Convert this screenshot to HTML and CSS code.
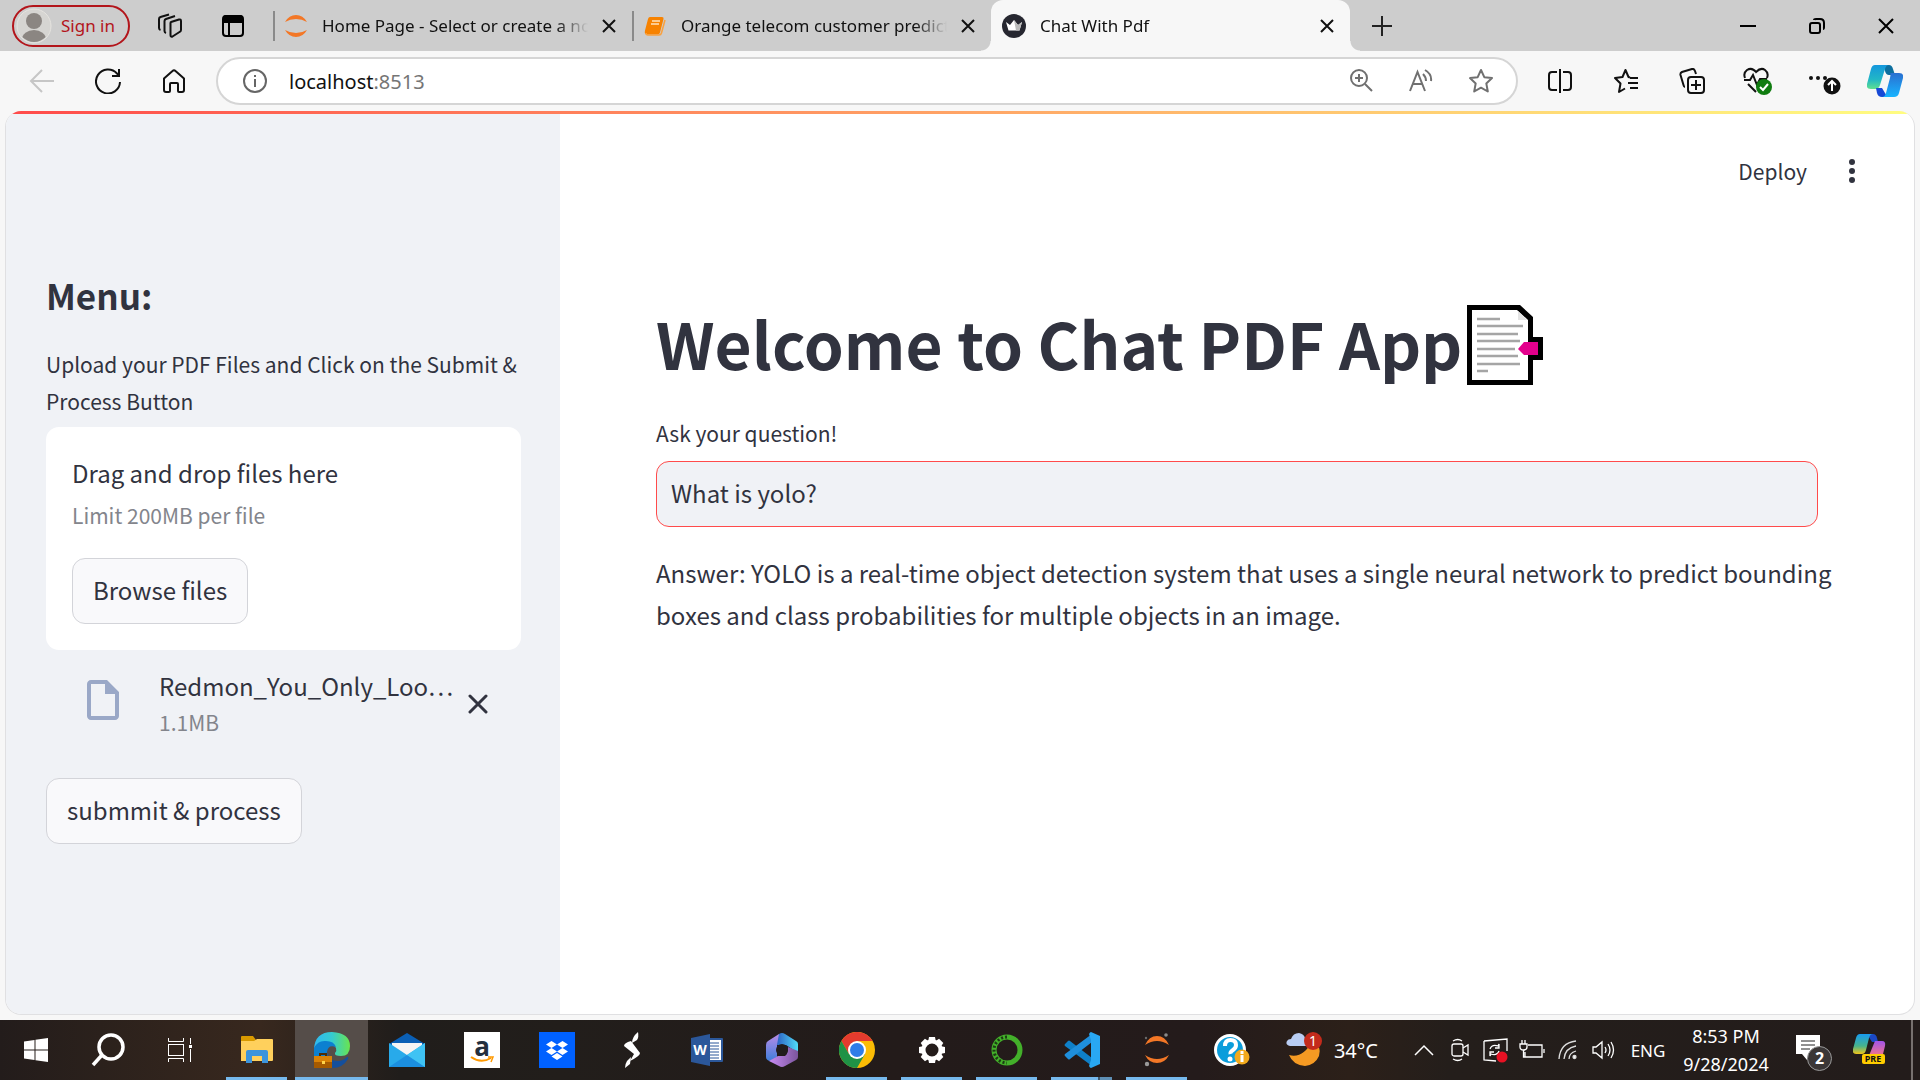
FILE: index.html
```html
<!DOCTYPE html>
<html lang="en">
<head>
<meta charset="utf-8">
<meta name="viewport" content="width=device-width, initial-scale=1">
<title>Chat With Pdf</title>
<link rel="stylesheet" href="styles.css">
</head>
<body>
<header class="browser">
  <div class="tabstrip">
    <button class="signin" type="button">
      <svg class="avatar" width="36" height="36" viewBox="0 0 36 36"><circle cx="18" cy="18" r="17" fill="#d6d5d2" stroke="#e6e4e0"/><clipPath id="av"><circle cx="18" cy="18" r="16"/></clipPath><g clip-path="url(#av)" fill="#8b8682"><circle cx="18" cy="13" r="8"/><ellipse cx="18" cy="31" rx="12" ry="9"/></g></svg>
      Sign in
    </button>
    <button class="strip-btn" type="button" aria-label="Workspaces">
      <svg width="26" height="26" viewBox="0 0 26 26" fill="none" stroke="#111" stroke-width="2" stroke-linejoin="round"><path d="M14 9l8-2.500q2-.5 2 1.500v9q0 1.500-1.500 2l-7 4.500q-2 .8-2-1.500V10q0-1 .5-1z"/><path d="M9 20q-1.500-.5-1.500-2V8q0-1.500 1.500-2l9-3M3.500 17Q2 16.500 2 15V6q0-1.500 1.500-2L12 1.500"/></svg>
    </button>
    <button class="strip-btn" type="button" aria-label="Tab actions">
      <svg width="24" height="24" viewBox="0 0 24 24"><rect x="2" y="2" width="20" height="20" rx="3" fill="none" stroke="#000" stroke-width="2"/><path d="M2 4q0-3 3-3h14q3 0 3 3v5H2z"/><path d="M8 8v14" stroke="#000" stroke-width="2"/></svg>
    </button>
    <div class="tabs" role="tablist">
      <div class="tab">
        <svg width="24" height="24" viewBox="0 0 24 24" fill="#f37726"><path d="M1 8Q5 1 12 1t11 7Q18 5 12 5T1 8zM1 16q5 3 11 3t11-3q-4 7-11 7T1 16z"/></svg>
        <span class="tab-title" role="tab">Home Page - Select or create a notebook</span>
        <button class="tab-close" type="button" aria-label="Close tab"><svg width="14" height="14" viewBox="0 0 14 14"><path d="M1 1l12 12M13 1L1 13" stroke="#111" stroke-width="2"/></svg></button>
      </div>
      <div class="tab">
        <svg width="24" height="24" viewBox="0 0 24 24"><path d="M7 3h12q2 0 1.500 2L17 18.500q-.5 2-2.500 2H4q-3 0-2-4L5 5q.5-2 2-2z" fill="#f78200"/><path d="M9 7h8M8 10h8" stroke="#ffe2bd" stroke-width="1.300" fill="none"/><path d="M3 19q0 2 2 2h11q2 0 2.500-2L22 6" stroke="#f9a13f" stroke-width="1.500" fill="none"/></svg>
        <span class="tab-title" role="tab">Orange telecom customer prediction</span>
        <button class="tab-close" type="button" aria-label="Close tab"><svg width="14" height="14" viewBox="0 0 14 14"><path d="M1 1l12 12M13 1L1 13" stroke="#111" stroke-width="2"/></svg></button>
      </div>
      <div class="tab tab-active">
        <svg width="24" height="24" viewBox="0 0 24 24"><circle cx="12" cy="12" r="12" fill="#262730"/><path d="M4 8l4 3 4-5 4 5 4-3-2.500 8.500h-11z" fill="#fff"/><path d="M12 6l4 5 4-3-2.500 8.500H14z" fill="#bbb"/></svg>
        <span class="tab-title" role="tab" aria-selected="true">Chat With Pdf</span>
        <button class="tab-close" type="button" aria-label="Close tab"><svg width="14" height="14" viewBox="0 0 14 14"><path d="M1 1l12 12M13 1L1 13" stroke="#111" stroke-width="2"/></svg></button>
      </div>
    </div>
    <button class="strip-btn newtab" type="button" aria-label="New tab"><svg width="22" height="22" viewBox="0 0 22 22"><path d="M11 1v20M1 11h20" stroke="#222" stroke-width="2"/></svg></button>
    <div class="window-controls">
      <button type="button" aria-label="Minimize"><svg width="16" height="16" viewBox="0 0 16 16"><path d="M0 8h16" stroke="#000" stroke-width="2"/></svg></button>
      <button type="button" aria-label="Restore"><svg width="16" height="16" viewBox="0 0 16 16" fill="none" stroke="#000" stroke-width="2"><rect x="1" y="5" width="10" height="10" rx="2"/><path d="M5 2q0-1 2-1h4q4 0 4 4v4q0 2-1 2"/></svg></button>
      <button type="button" aria-label="Close window"><svg width="16" height="16" viewBox="0 0 16 16"><path d="M1 1l14 14M15 1L1 15" stroke="#000" stroke-width="2"/></svg></button>
    </div>
  </div>
  <div class="toolbar">
    <button class="tool" type="button" aria-label="Back"><svg width="26" height="26" viewBox="0 0 26 26" fill="none" stroke="#c6c6c6" stroke-width="2"><path d="M13 2L2 13l11 11M2 13h23"/></svg></button>
    <button class="tool" type="button" aria-label="Refresh"><svg width="26" height="26" viewBox="0 0 26 26" fill="none" stroke="#111" stroke-width="2"><path d="M25 14A12 12 0 1 1 22 5.500l2 2M24 1v7h-7"/></svg></button>
    <button class="tool" type="button" aria-label="Home"><svg width="26" height="26" viewBox="0 0 26 26" fill="none" stroke="#111" stroke-width="2" stroke-linejoin="round"><path d="M3 10.500L11.500 3q1.500-1.500 3 0L23 10.500V22q0 2-2 2h-3q-1 0-1-1v-7q0-1-1-1h-6q-1 0-1 1v7q0 1-1 1H5q-2 0-2-2z"/></svg></button>
    <div class="address">
      <svg width="26" height="26" viewBox="0 0 26 26" fill="none" stroke="#666" stroke-width="2"><circle cx="13" cy="13" r="11"/><path d="M13 11v8M13 7v2"/></svg>
      <span class="url">localhost<span class="port">:8513</span></span>
      <button class="inner-tool" type="button" aria-label="Zoom"><svg width="24" height="24" viewBox="0 0 24 24" fill="none" stroke="#707070" stroke-width="2"><circle cx="10" cy="9" r="8"/><path d="M16 15l7 7M10 5v8M6 9h8"/></svg></button>
      <button class="inner-tool" type="button" aria-label="Read aloud"><svg width="24" height="24" viewBox="0 0 24 24" fill="none" stroke="#707070" stroke-width="2"><path d="M1 22L8.500 3l7.500 19M4 15h9M14 5q3 3 3 7M16 1q7 4 6 11"/></svg></button>
      <button class="inner-tool" type="button" aria-label="Add to favorites"><svg width="26" height="26" viewBox="0 0 26 26" fill="none" stroke="#707070" stroke-width="2" stroke-linejoin="round"><path d="M13 2l3.300 7.200 7.700.9-5.700 5.300 1.500 8.100L13 19.700l-6.800 3.800 1.500-8.100L2 10.100l7.700-.9z"/></svg></button>
    </div>
    <button class="tool" type="button" aria-label="Split screen"><svg width="26" height="26" viewBox="0 0 26 26" fill="none" stroke="#111" stroke-width="2"><path d="M10 4H5Q2 4 2 7v12q0 3 3 3h5M16 4h5q3 0 3 3v12q0 3-3 3h-5M13 1v24"/></svg></button>
    <button class="tool" type="button" aria-label="Favorites"><svg width="26" height="26" viewBox="0 0 26 26" fill="none" stroke="#111" stroke-width="2" stroke-linejoin="round"><path d="M17 9.500L15.500 9 12.500 2 9.500 9 2 10l5.500 5.500L6 24l6-3.500M17 10h8M15 15h10M17 20h8"/></svg></button>
    <button class="tool" type="button" aria-label="Collections"><svg width="26" height="26" viewBox="0 0 26 26" fill="none" stroke="#111" stroke-width="2"><rect x="9" y="9" width="16" height="16" rx="3"/><path d="M17 12v10M12 17h10M6 19q-1 0-1.500-2L1.500 7Q1 5 3 4l10-3q2-.5 3 2l1 3"/></svg></button>
    <button class="tool" type="button" aria-label="Browser essentials"><svg width="30" height="28" viewBox="0 0 30 28" fill="none" stroke="#111" stroke-width="2"><path d="M2 11Q0 6 4 3q5-3 9 2 5-5 9-2 4 3 2 8M1 13h6l3-5 4 10 3-6h7M5 17l8 8"/><circle cx="21" cy="20" r="8" fill="#107c10" stroke="none"/><path d="M17 20l3 3 5-6" stroke="#fff"/></svg></button>
    <button class="tool" type="button" aria-label="Settings and more"><svg width="34" height="30" viewBox="0 0 34 30"><g fill="#111"><circle cx="4" cy="12" r="2"/><circle cx="11" cy="12" r="2"/><circle cx="18" cy="12" r="2"/><circle cx="25" cy="20" r="8.500"/></g><path d="M25 25v-10M21 19l4-4 4 4" stroke="#fff" stroke-width="2" fill="none"/></svg></button>
    <button class="tool copilot" type="button" aria-label="Copilot">
      <svg width="36" height="34" viewBox="0 0 36 34"><defs><linearGradient id="cpa" x1="0" y1="0" x2="0" y2="1"><stop offset="0" stop-color="#1497dd"/><stop offset=".6" stop-color="#22b7c6"/><stop offset="1" stop-color="#5fe08f"/></linearGradient><linearGradient id="cpb" x1="0" y1="0" x2="0" y2="1"><stop offset="0" stop-color="#2a6fd0"/><stop offset="1" stop-color="#18b4ff"/></linearGradient></defs><path d="M16 1h6q3 0 4 4l2 6h-6q-3 0-4-4z" fill="#0d6f9f"/><path d="M8 1h14q-3 0-4 4l-5 16q-1 4-5 4H4q-5 0-4-5L4 5q1-4 4-4z" fill="url(#cpa)"/><path d="M9 24h6l3 5q1 3 4 4h-7q-4 0-5-4z" fill="#1749d6"/><path d="M23 9h9q5 0 4 5l-4 15q-1 4-5 4h-12q3 0 4-4l4-15q1-5 0-5z" fill="url(#cpb)"/></svg>
    </button>
  </div>
</header>

<div class="viewport">
  <div class="page">
    <aside class="sidebar">
      <h2 class="menu-title">Menu:</h2>
      <label class="label upload-label" for="browse">Upload your PDF Files and Click on the Submit &amp; Process Button</label>
      <section class="dropzone">
        <span class="drop-main">Drag and drop files here</span>
        <span class="drop-hint">Limit 200MB per file</span>
        <button class="btn" id="browse" type="button">Browse files</button>
      </section>
      <div class="file">
        <svg class="file-icon" width="48" height="48" viewBox="0 0 24 24" fill="#9aa8c7"><path d="M6 2c-1.100 0-2 .9-2 2v16c0 1.100.9 2 2 2h12c1.100 0 2-.9 2-2V8l-6-6H6zm0 2h7v5h5v11H6V4z"/></svg>
        <div class="file-info">
          <span class="file-name">Redmon_You_Only_Loo…</span>
          <span class="file-size">1.1MB</span>
        </div>
        <button class="file-remove" type="button" aria-label="Remove file"><svg width="20" height="20" viewBox="0 0 20 20"><path d="M2 2l16 16M18 2L2 18" stroke="#31333f" stroke-width="3" stroke-linecap="round"/></svg></button>
      </div>
      <button class="btn" type="button">submmit &amp; process</button>
    </aside>
    <main class="main">
      <div class="app-bar">
        <button class="deploy" type="button">Deploy</button>
        <button class="dots" type="button" aria-label="Main menu"><svg width="6" height="24" viewBox="0 0 6 24" fill="#31333f"><circle cx="3" cy="3" r="3"/><circle cx="3" cy="12" r="3"/><circle cx="3" cy="21" r="3"/></svg></button>
      </div>
      <h1 class="title">Welcome to Chat PDF App<svg class="emoji" width="76" height="80" viewBox="0 0 76 80" role="img" aria-label="Bookmark tabs"><path d="M0 0h53l13 12v20h10v23H66v25H0z"/><path d="M5 5h45l11 10v60H5z" fill="#fff"/><path d="M51 6l9 9h-9z" fill="#e3e3e3"/><path d="M10 14h23M10 21h46M10 29h41M10 36h43M10 44h38M10 51h41M10 59h43M10 66h11" stroke="#a5a5a5" stroke-width="2.500"/><path d="M51 44l6-7h14v13H57z" fill="#e3008c"/></svg></h1>
      <label class="label" for="question">Ask your question!</label>
      <input class="question" id="question" type="text" value="What is yolo?">
      <p class="answer">Answer: YOLO is a real-time object detection system that uses a single neural network to predict bounding boxes and class probabilities for multiple objects in an image.</p>
    </main>
  </div>
</div>

<footer class="taskbar">
  <div class="system">
    <button type="button" aria-label="Start"><svg width="24" height="24" viewBox="0 0 24 24" fill="#fff"><path d="M0 3.500L10.500 2v9.500H0zM11.500 1.800L24 0v11.500H11.500zM0 12.500h10.500V22L0 20.500zM11.500 12.500H24V24l-12.500-1.800z"/></svg></button>
    <button type="button" aria-label="Search"><svg width="34" height="34" viewBox="0 0 34 34" fill="none" stroke="#fff" stroke-width="3.500"><circle cx="20" cy="14" r="12"/><path d="M11 22L2 32"/></svg></button>
    <button type="button" aria-label="Task view"><svg width="26" height="24" viewBox="0 0 26 24" fill="none" stroke="#fff"><rect x="1.500" y="6.500" width="15" height="11"/><path d="M1.500 0v3.500h15V0M1.500 24v-3.500h15V24M23.500 0v6M23.500 11v13"/><path d="M22 7h3v3h-3z" fill="#fff" stroke="none"/></svg></button>
  </div>
  <nav class="apps" aria-label="Apps">
    <button class="app running" type="button" aria-label="File Explorer"><svg width="32" height="28" viewBox="0 0 32 28"><path d="M0 1q0-1 1-1h11l3 4v5H0z" fill="#d99a00"/><path d="M0 5h13l3-2h15q1 0 1 1v20q0 1-1 1H0z" fill="#ffd05c"/><path d="M5 27V16q0-2 2-2h18q2 0 2 2v11h-6v-7H11v7z" fill="#3c94dc"/></svg></button>
    <button class="app running current" type="button" aria-label="Edge"><svg width="36" height="36" viewBox="0 0 36 36"><defs><linearGradient id="eg"><stop offset="0" stop-color="#2fb9f2"/><stop offset=".5" stop-color="#35cbd0"/><stop offset="1" stop-color="#69e44e"/></linearGradient></defs><path d="M0 17Q1 0 18 0q18 1 18 14 0 10-9 10-7 0-6-3 2-2 1-5-3-6-12-6Q3 10 0 17z" fill="url(#eg)"/><path d="M0 24V16Q4 8 12 9q8 0 10 6-8-3-9 5 0 4 2 7L0 30z" fill="#0c80d0"/><path d="M13 20q0 9 11 9 5 0 9-4 2-1 1 2-5 9-16 9-8-4-5-16z" fill="#144f9c"/><path d="M6 24v-2h6v2" stroke="#4b2c05" stroke-width="2" fill="none"/><rect y="24" width="18" height="12" fill="#d98206"/><path d="M0 30h18v6H0z" fill="#a65a00"/><path d="M8 29h3v3H8z" fill="#ffd24a"/></svg></button>
    <button class="app" type="button" aria-label="Mail"><svg width="36" height="34" viewBox="0 0 36 34"><path d="M0 11L18 0l18 11v8H0z" fill="#0a5fb5"/><path d="M3 10h30v14H3z" fill="#f4f4f4"/><path d="M0 10l18 12L36 10v24H0z" fill="#28aaea"/><path d="M0 34l18-12L36 34z" fill="#1b8fe0"/><path d="M36 10v24L18 22z" fill="#3fc3f4"/></svg></button>
    <button class="app" type="button" aria-label="Amazon"><svg width="36" height="36" viewBox="0 0 36 36"><path fill="#fff" d="M0 0h36v36H0z"/><text x="18" y="24" text-anchor="middle" class="amazon-a">a</text><path d="M7 25q10 7 20 1" fill="none" stroke="#f90" stroke-width="2"/><path d="M24 25h5l-2 5" fill="none" stroke="#f90" stroke-width="1.500"/></svg></button>
    <button class="app" type="button" aria-label="Dropbox"><svg width="36" height="36" viewBox="0 0 36 36"><path fill="#0061ff" d="M0 0h36v36H0z"/><path fill="#fff" d="M12.500 9L18 12.500 12.500 16 7 12.500zM23.500 9L29 12.500 23.500 16 18 12.500zM12.500 16L18 19.500 12.500 23 7 19.500zM23.500 16L29 19.500 23.500 23 18 19.500zM18 21l5.500 3.500L18 28l-5.500-3.500z"/></svg></button>
    <button class="app" type="button" aria-label="S app"><svg width="18" height="36" viewBox="0 0 18 36" fill="#fff"><path d="M15 0q1 5-1 8l-5 3Q9 5 15 0zM8 9l9 12q0 3-10 8l4-7L1 14q0-3 7-5zM8 25l-1 7-5 4q0-4 2-7z"/></svg></button>
    <button class="app" type="button" aria-label="Word"><svg width="32" height="32" viewBox="0 0 32 32"><rect x="17" y="4" width="15" height="24" rx="1" fill="#2b579a"/><path fill="#fff" d="M18 6h12v20H18z"/><path d="M19 9h9M19 12h9M19 15h9M19 18h9M19 21h9M19 24h9" stroke="#2b579a"/><path d="M0 4l19-4v32L0 28z" fill="#2b579a"/><text x="9" y="21" text-anchor="middle" class="word-w">W</text></svg></button>
    <button class="app" type="button" aria-label="Microsoft 365"><svg width="32" height="34" viewBox="0 0 32 34"><defs><linearGradient id="ma" x1="0" y1="0" x2="0" y2="1"><stop offset="0" stop-color="#b98be6"/><stop offset="1" stop-color="#3e7fdc"/></linearGradient><linearGradient id="mb"><stop offset="0" stop-color="#2d63c4"/><stop offset="1" stop-color="#50dcf8"/></linearGradient><linearGradient id="mc"><stop offset="0" stop-color="#c98cf4"/><stop offset="1" stop-color="#7b559c"/></linearGradient></defs><path d="M2 8L13 1q4 2 2 5l-4 6v12l-7 4q-4-1-4-4V12q0-3 2-4z" fill="url(#ma)"/><path d="M13 1q3-2 6 0l11 7q2 1 2 3v9L20 12h-9q1-6 2-11z" fill="url(#mb)"/><path d="M32 18v6q0 2-2 3l-11 6q-3 2-6 0L3 28l9-5h7q3-2 3-9z" fill="url(#mc)"/><circle cx="16" cy="17" r="6" fill="#221d1c"/></svg></button>
    <button class="app running" type="button" aria-label="Chrome"><svg width="36" height="36" viewBox="0 0 36 36"><circle cx="18" cy="18" r="18" fill="#fbbc05"/><path d="M2.400 9A18 18 0 0 1 33.600 9H18L10 22z" fill="#e33b2e"/><path d="M2.400 9A18 18 0 0 0 18 36l8-14H10z" fill="#1f9246"/><circle cx="18" cy="18" r="9" fill="#fff"/><circle cx="18" cy="18" r="7" fill="#2f7de9"/></svg></button>
    <button class="app running" type="button" aria-label="Settings"><svg width="28" height="28" viewBox="-14 -14 28 28"><g fill="#fff"><path id="tooth" d="M-3-13h6l1 5h-8z"/><use href="#tooth" transform="rotate(45)"/><use href="#tooth" transform="rotate(90)"/><use href="#tooth" transform="rotate(135)"/><use href="#tooth" transform="rotate(180)"/><use href="#tooth" transform="rotate(225)"/><use href="#tooth" transform="rotate(270)"/><use href="#tooth" transform="rotate(315)"/></g><circle r="8.500" fill="none" stroke="#fff" stroke-width="4"/></svg></button>
    <button class="app running" type="button" aria-label="Anaconda"><svg width="34" height="34" viewBox="0 0 34 34" fill="none"><circle cx="17" cy="17" r="13" stroke="#43b02a" stroke-width="5"/><path d="M17 4A13 13 0 0 0 17 30" stroke="#1c3b14" stroke-width="3" stroke-dasharray="2 2"/></svg></button>
    <button class="app running stacked" type="button" aria-label="Visual Studio Code"><svg width="36" height="36" viewBox="0 0 36 36"><path d="M1 12l3-3q1-1 2 0l22 17v8L1 14q-1-1 0-2z" fill="#0f80c8"/><path d="M1 24l3 3q1 1 2 0l22-17V2L1 22q-1 1 0 2z" fill="#1f8fdc"/><path d="M27 0l9 4v28l-9 4q-1 0-2-2l2-6V8l-2-6q1-2 2-2z" fill="#29a8f3"/></svg></button>
    <button class="app running" type="button" aria-label="Jupyter"><svg width="26" height="34" viewBox="0 0 26 34"><path d="M1 12Q5 3 13 3t12 9Q19 8 13 8T1 12zM1 22q6 4 12 4t12-4q-4 8-12 8T1 22z" fill="#f37726"/><circle cx="22" cy="2" r="1.800" fill="#8a8a8a"/><circle cx="3" cy="31" r="2.200" fill="#9a9a9a"/><circle cx="2" cy="5" r="1.200" fill="#6a6a6a"/></svg></button>
    <button class="app" type="button" aria-label="Help"><svg width="36" height="32" viewBox="0 0 36 32"><circle cx="16" cy="16" r="14.500" fill="#0b9ddb" stroke="#fff" stroke-width="3"/><path d="M11 12q0-6 5.500-6t5.500 5q0 3-3 5t-2.500 4" fill="none" stroke="#fff" stroke-width="4"/><circle cx="16" cy="25" r="2.500" fill="#fff"/><circle cx="28" cy="23" r="7.500" fill="#f2a91c"/><path d="M28 21v7M28 17v3" stroke="#fff" stroke-width="3"/></svg></button>
  </nav>
  <div class="tray">
    <button class="weather" type="button"><svg width="36" height="36" viewBox="0 0 36 36"><path d="M3 23q14 4 24-15 9 6 6 16-4 9-14 10Q7 33 3 23z" fill="#f59a23"/><path d="M4 14q-5-1-3-5 1-2 4-2 2-6 8-6 5 1 6 5 4 0 4 4t-4 4z" fill="#b9cdf3"/><circle cx="27" cy="9" r="9" fill="#c42b1c"/><text x="27" y="14" text-anchor="middle" class="badge-one">1</text></svg>34°C</button>
    <button class="tray-btn" type="button" aria-label="Show hidden icons"><svg width="20" height="12" viewBox="0 0 20 12"><path d="M1 11l9-9 9 9" fill="none" stroke="#fff" stroke-width="1.500"/></svg></button>
    <button class="tray-btn" type="button" aria-label="Meet now"><svg width="18" height="24" viewBox="0 0 18 24" fill="none" stroke="#fff" stroke-width="1.300"><rect x="1" y="6" width="11" height="12" rx="2"/><path d="M12 10l5-3v10l-5-3M2 3q5-3 9 0M2 21q5 3 9 0"/></svg></button>
    <button class="tray-btn" type="button" aria-label="Sync"><svg width="26" height="26" viewBox="0 0 26 26" fill="none" stroke="#fff" stroke-width="1.300"><path d="M1 4l23-2v12M1 4v19l12 1M7 12q2-5 8-3l1-2v4h-4M16 14q-2 5-8 3l-1 2v-4h4"/><circle cx="19" cy="20" r="5.500" fill="#e81123" stroke="none"/></svg></button>
    <button class="tray-btn" type="button" aria-label="Battery"><svg width="26" height="20" viewBox="0 0 26 20" fill="none" stroke="#fff" stroke-width="1.300"><path d="M9 5h14v12H6v-5M25 9v4M1 4h7v3q0 3-3.500 3T1 7zM3 0v4M6 0v4M4.500 10v7H7"/></svg></button>
    <button class="tray-btn" type="button" aria-label="Wi-Fi"><svg width="20" height="20" viewBox="0 0 20 20" fill="none" stroke="#ddd" stroke-width="1.300"><path d="M1 19Q2 3 18 1M6 19Q7 8 18 6M11 19q0-6 7-8"/><circle cx="16.500" cy="17" r="1.500" fill="#fff"/></svg></button>
    <button class="tray-btn" type="button" aria-label="Volume"><svg width="24" height="20" viewBox="0 0 24 20" fill="none" stroke="#fff" stroke-width="1.300"><path d="M1 7h3l6-5v16l-6-5H1zM13 7q2 3 0 6M16 4q4 6 0 12M19 2q5 8 0 16"/></svg></button>
    <button class="lang" type="button">ENG</button>
    <button class="clock" type="button"><span>8:53 PM</span><span>9/28/2024</span></button>
    <button class="notify" type="button" aria-label="Notifications"><svg width="36" height="36" viewBox="0 0 36 36"><path d="M0 0h24v19H13l-2 6-5-6H0z" fill="#fff"/><path d="M5 6h14M5 10h14M5 14h9" stroke="#222"/><circle cx="23.500" cy="23.500" r="12" fill="#3b3737" stroke="#999"/><text x="23.500" y="29" text-anchor="middle" class="badge-two">2</text></svg></button>
    <button class="pre" type="button" aria-label="Copilot preview"><svg width="34" height="32" viewBox="0 0 34 32"><defs><linearGradient id="pa" x1="0" y1="0" x2="0" y2="1"><stop offset="0" stop-color="#179bf0"/><stop offset=".6" stop-color="#47b38c"/><stop offset="1" stop-color="#f0c419"/></linearGradient><linearGradient id="pb" x1="0" y1="0" x2="0" y2="1"><stop offset="0" stop-color="#a254ea"/><stop offset="1" stop-color="#ff7a7a"/></linearGradient></defs><path d="M14 0h6q3 0 4 4l1 4h-6z" fill="#1b48c4"/><path d="M7 0h13q-3 0-4 4l-3 12q-1 4-4 4H3q-4 0-3-5L3 4q1-4 4-4z" fill="url(#pa)"/><path d="M22 7h7q4 0 3 5l-3 12H15z" fill="url(#pb)"/><rect x="9" y="20" width="23" height="10" rx="2" fill="#fc0"/><text x="20" y="28" text-anchor="middle" class="pre-text">PRE</text></svg></button>
    <button class="show-desktop" type="button" aria-label="Show desktop"></button>
  </div>
</footer>
</body>
</html>
```
FILE: styles.css
```css
* { box-sizing: border-box; }

:root {
  --ink: #31333f;
  --muted: #83858c;
  --ui: "Noto Sans", "Open Sans", sans-serif;
  --app: "Noto Sans CJK KR", "Noto Sans CJK SC", sans-serif;
}

body {
  margin: 0;
  min-height: 100vh;
  display: flex;
  flex-direction: column;
  background: #f7f7f7;
  font-family: var(--ui);
  color: #111;
}

button {
  margin: 0;
  padding: 0;
  border: 0;
  background: none;
  font: inherit;
  color: inherit;
}

svg { display: block; flex: none; }

/* Tab strip */
.tabstrip {
  display: flex;
  align-items: center;
  height: 51px;
  padding-left: 12px;
  background: #cdcdcd;
}

.signin {
  display: flex;
  align-items: center;
  gap: 9px;
  width: 118px;
  height: 42px;
  padding-left: 2px;
  border: 2px solid #b3151b;
  border-radius: 21px;
  color: #b3151b;
  font-size: 17px;
  white-space: nowrap;
}

.strip-btn {
  display: grid;
  place-items: center;
  width: 63px;
  height: 51px;
}

.signin + .strip-btn { margin-left: 8px; }

.tabs {
  display: flex;
  align-items: stretch;
  height: 51px;
  margin-left: 9px;
}

.tab {
  position: relative;
  display: flex;
  align-items: center;
  gap: 14px;
  width: 359px;
  padding: 0 16px 0 11px;
  font-size: 17px;
}

.tab:not(.tab-active)::before {
  content: "";
  position: absolute;
  left: 0;
  top: 11px;
  width: 2px;
  height: 30px;
  background: #8a8a8a;
}

.tab-title {
  flex: 1;
  overflow: hidden;
  white-space: nowrap;
  -webkit-mask-image: linear-gradient(to right, #000 calc(100% - 32px), transparent);
  mask-image: linear-gradient(to right, #000 calc(100% - 32px), transparent);
}

.tab-active {
  background: #f7f7f7;
  border-radius: 12px 12px 0 0;
}

.tab-active::before,
.tab-active::after {
  content: "";
  position: absolute;
  bottom: 0;
  width: 10px;
  height: 10px;
}

.tab-active::before {
  left: -10px;
  background: radial-gradient(circle at 0 0, transparent 9px, #f7f7f7 10px);
}

.tab-active::after {
  right: -10px;
  background: radial-gradient(circle at 100% 0, transparent 9px, #f7f7f7 10px);
}

.window-controls {
  display: flex;
  margin-left: auto;
}

.window-controls button {
  display: grid;
  place-items: center;
  width: 69px;
  height: 51px;
}

/* Toolbar */
.toolbar {
  display: flex;
  align-items: center;
  height: 60px;
  padding: 0 7px 0 9px;
}

.tool {
  display: grid;
  place-items: center;
  flex: none;
  width: 66px;
  height: 48px;
}

.address ~ .copilot { width: 56px; }

.address {
  display: flex;
  align-items: center;
  flex: 1;
  height: 48px;
  margin: 0 9px;
  padding: 0 5px 0 24px;
  border: 2px solid #d5d5d5;
  border-radius: 24px;
  background: #fff;
}

.url {
  flex: 1;
  padding-left: 21px;
  font-size: 20px;
}

.port { color: #757575; }

.inner-tool {
  display: grid;
  place-items: center;
  width: 60px;
  height: 40px;
}

/* Web page frame */
.viewport {
  display: flex;
  flex: 1;
  padding: 0 5px 5px;
}

.page {
  position: relative;
  display: flex;
  flex: 1;
  overflow: hidden;
  border: 1px solid #e0e0e2;
  border-top: 0;
  border-radius: 16px;
  background: #fff;
  color: var(--ink);
  font-family: var(--app);
  font-size: 24px;
}

.page::before {
  content: "";
  position: absolute;
  inset: 0 0 auto;
  height: 3px;
  background: linear-gradient(90deg, #ff4b4b, #fffd80);
}

.sidebar {
  flex: none;
  width: 554px;
  padding: 163px 39px 39px 40px;
  background: #f0f2f6;
}

.menu-title {
  margin: 0 0 30px;
  font-size: 35px;
  line-height: 42px;
  font-weight: 600;
}

.label {
  display: block;
  margin-bottom: 9px;
  font-size: 21px;
  line-height: 37px;
}

.upload-label {
  margin-right: -8px;
  margin-bottom: 7px;
}

.dropzone {
  display: flex;
  flex-direction: column;
  align-items: flex-start;
  padding: 25px 26px 26px;
  border-radius: 13px;
  background: #fff;
}

.drop-main { line-height: 42px; }

.drop-hint {
  margin: 3px 0 24px;
  font-size: 21px;
  line-height: 37px;
  color: var(--muted);
}

.btn {
  height: 66px;
  padding: 0 20px 4px;
  border: 1px solid #d3d4d9;
  border-radius: 13px;
  background: #f9f9fb;
  white-space: nowrap;
}

.file {
  display: flex;
  align-items: center;
  padding: 18px 33px 38px;
}

.file-icon { margin-bottom: 8px; }

.file-info {
  display: flex;
  flex: 1;
  flex-direction: column;
  min-width: 0;
  margin: 0 10px 0 32px;
  line-height: 36px;
}

.file-name {
  overflow: hidden;
  text-overflow: ellipsis;
  white-space: nowrap;
}

.file-size {
  font-size: 21px;
  color: var(--muted);
}

.main {
  flex: 1;
  min-width: 0;
  padding: 40px 96px;
}

.app-bar {
  display: flex;
  align-items: center;
  justify-content: flex-end;
  gap: 42px;
  height: 40px;
  margin: 0 -37px 108px 0;
  font-size: 21px;
}

.title {
  display: flex;
  align-items: flex-end;
  gap: 5px;
  margin: 0 0 30px;
  font-size: 64px;
  line-height: 86px;
  font-weight: 700;
  white-space: nowrap;
}

.question {
  display: block;
  width: 100%;
  height: 66px;
  padding: 0 14px 4px;
  border: 1px solid #ff4b4b;
  border-radius: 13px;
  background: #f0f2f6;
  color: inherit;
  font: inherit;
  outline: 0;
}

.answer {
  margin: 25px -24px 0 0;
  line-height: 42px;
}

/* Taskbar */
.taskbar {
  display: flex;
  height: 60px;
  background: linear-gradient(90deg, #231c1b 0, #2b211c 100px, #38281e 260px, #201d1b 400px, #221e1b 560px, #231b1a 900px, #241b1b 1200px, #2c2019 1350px, #241e1b 1450px, #231c1b 100%);
  color: #fff;
}

.system { display: flex; }

.system button {
  display: grid;
  place-items: center;
  width: 72px;
}

.apps {
  display: flex;
  gap: 2px;
  margin-left: 4px;
}

.app {
  position: relative;
  display: grid;
  place-items: center;
  width: 73px;
}

.running::after {
  content: "";
  position: absolute;
  left: 6px;
  right: 6px;
  bottom: 0;
  height: 3px;
  background: #76b9ed;
}

.current { background: #554d49; }

.current::after {
  left: 0;
  right: 0;
}

.stacked::after { background: linear-gradient(90deg, #76b9ed 47px, #3e566a 47px 49px, #5f8fb5 49px); }

.tray {
  display: flex;
  align-items: stretch;
  margin-left: auto;
}

.weather {
  display: flex;
  align-items: center;
  gap: 12px;
  margin-right: 28px;
  font-size: 20px;
}

.tray-btn {
  display: grid;
  place-items: center;
  width: 36px;
}

.lang {
  width: 52px;
  font-size: 17px;
}

.clock {
  display: flex;
  flex-direction: column;
  align-items: center;
  justify-content: center;
  width: 104px;
  font-size: 18px;
  line-height: 28px;
}

.notify {
  display: grid;
  place-items: center;
  width: 72px;
  padding-top: 6px;
}

.pre {
  display: grid;
  place-items: center;
  width: 40px;
}

.show-desktop {
  width: 9px;
  margin-left: 21px;
  border-left: 2px solid #77716f;
}

.amazon-a { font: 700 26px "Open Sans", sans-serif; fill: #232f3e; }
.word-w { font: 700 14px "Open Sans", sans-serif; fill: #fff; }
.badge-one { font: 14px var(--ui); fill: #fff; }
.badge-two { font: 700 16px var(--ui); fill: #fff; }
.pre-text { font: 700 9px var(--ui); fill: #111; }
```
